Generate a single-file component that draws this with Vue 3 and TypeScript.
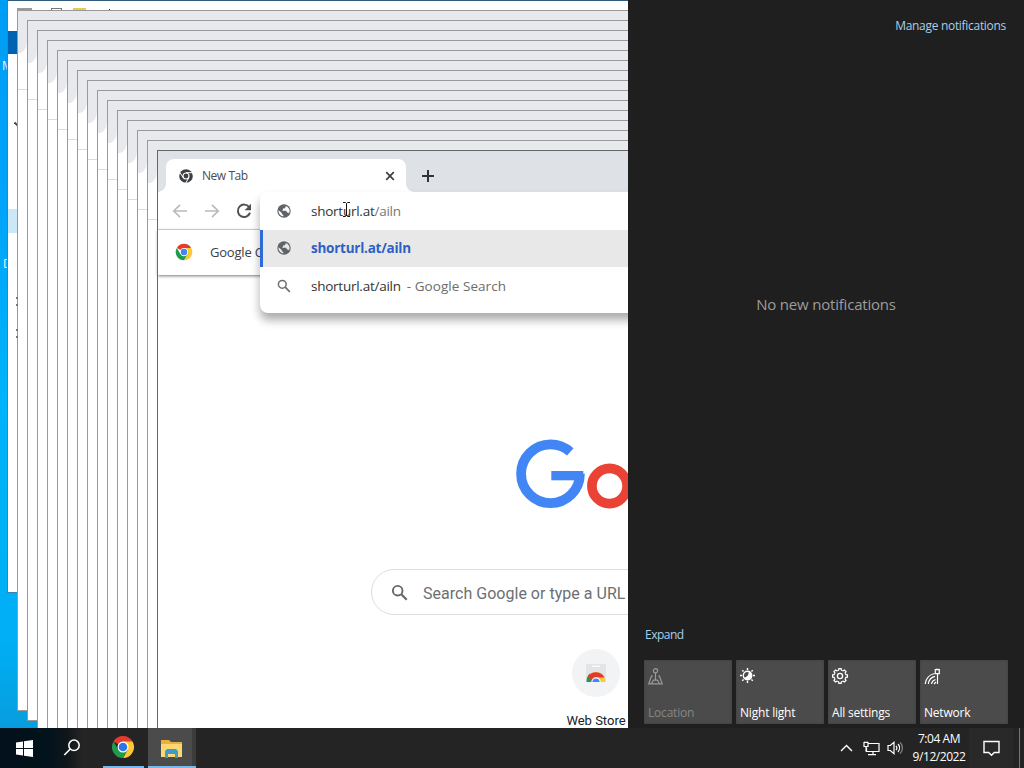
<script setup lang="ts">
interface Trail { x: number; y: number; h: number }

const trails: Trail[] = Array.from({ length: 14 }, (_, i) => ({
  x: 17 + i * 10,
  y: 10 + i * 10,
  h: 701,
}))
const explorerMarks: number[] = [297, 304, 329, 336]
const gearTeeth: number[] = [0, 45, 90, 135, 180, 225, 270, 315]
</script>

<template>
  <div class="desktop">
    <span class="desk-label first">M</span>
    <span class="desk-label second">D</span>

    <section class="explorer">
      <i class="ex-icon page-icon"></i>
      <i class="ex-icon check"></i>
      <i class="ex-icon folder"></i>
      <i class="ex-icon sep"></i>
      <i class="file-tab"></i>
      <svg class="chev" width="6" height="8" viewBox="0 0 6 8"><path d="M.5 1.500 5 6" stroke="#444" stroke-width="1.800" /></svg>
      <i class="selection"></i>
    </section>

    <div
      v-for="t in trails"
      :key="t.x"
      class="ghost"
      :style="{ left: t.x + 'px', top: t.y + 'px', height: t.h + 'px' }"
    >
      <div class="ghost-strip"></div>
      <div class="ghost-bar"><i class="ghost-curve"></i></div>
    </div>
    <i v-for="m in explorerMarks" :key="m" class="mark" :style="{ top: m + 'px' }"></i>

    <section class="chrome">
      <header class="strip">
        <div class="tab">
          <svg width="14" height="14" viewBox="0 0 14 14">
            <circle cx="7" cy="7" r="6.800" fill="#3c4043" />
            <circle cx="7" cy="7" r="3.500" fill="#fff" />
            <circle cx="7" cy="7" r="2.400" fill="#3c4043" />
            <path d="M7 3.700H13.500M4.100 8.700.9 3.300M9.900 8.700 6.700 14" stroke="#fff" stroke-width="1" fill="none" />
          </svg>
          <span class="tab-title">New Tab</span>
          <svg class="close" width="10" height="10" viewBox="0 0 10 10"><path d="m1.200 1.200 7.600 7.600m0-7.600-7.600 7.600" stroke="#3c4043" stroke-width="1.700" /></svg>
        </div>
        <svg class="plus" width="14" height="14" viewBox="0 0 14 14"><path d="M7 1v12M1 7h12" stroke="#303438" stroke-width="2" /></svg>
      </header>
      <div class="toolbar">
        <svg width="16" height="16" viewBox="0 0 16 16"><path d="M15 8H2M8 1.800 1.800 8 8 14.200" stroke="#b9bbbd" stroke-width="1.700" fill="none" /></svg>
        <svg width="16" height="16" viewBox="0 0 16 16"><path d="M1 8h13M8 1.800 14.200 8 8 14.200" stroke="#b9bbbd" stroke-width="1.700" fill="none" /></svg>
        <svg width="16" height="16" viewBox="0 0 16 16"><path d="M13.400 4.600A6.200 6.200 0 1 0 14 9.600" stroke="#505356" stroke-width="2" fill="none" /><path d="M15 .8v6.400H8.600z" fill="#505356" /></svg>
      </div>
      <div class="bookmarks">
        <svg width="18" height="18" viewBox="0 0 24 24">
          <path d="M12 12 2.470 6.500A11 11 0 0 1 21.530 6.500z" fill="#e33b2e" />
          <path d="M21.530 6.500A11 11 0 0 1 12 23L16.800 14.500 12 6.500z" fill="#fcc934" />
          <path d="M2.470 6.500A11 11 0 0 0 12 23l4.800-8.500H7.200z" fill="#1e9b4b" />
          <circle cx="12" cy="12" r="5.500" fill="#fff" /><circle cx="12" cy="12" r="4.300" fill="#4285f4" />
        </svg>
        <span>Google Chrome</span>
      </div>
      <main class="page">
        <svg class="logo" role="img" aria-label="Google" width="120" height="74" viewBox="514 437 120 74">
          <circle cx="550.500" cy="473.700" r="29.400" fill="none" stroke="#4285f4" stroke-width="9.800" stroke-dasharray="160 200" />
          <rect x="551.300" y="471" width="32" height="9.300" fill="#4285f4" />
          <circle cx="609.500" cy="486" r="17.600" fill="none" stroke="#ea4335" stroke-width="9.700" />
        </svg>
        <div class="searchbox">
          <svg width="18" height="18" viewBox="0 0 18 18"><circle cx="6.700" cy="6.700" r="4.800" fill="none" stroke="#66696c" stroke-width="1.900" /><path d="m10.300 10.300 5.400 5.400" stroke="#66696c" stroke-width="2.200" /></svg>
          <span>Search Google or type a URL</span>
        </div>
        <div class="shortcut">
          <div class="disc">
            <svg width="20" height="18" viewBox="0 0 20 18">
              <path d="M0 0h20v18H0z" fill="#e2e4e6" /><path d="M6 1.500h8v1.500H6z" fill="#f8f9fa" />
              <path d="M.5 18a9.500 10 0 0 1 19 0z" fill="#fcc934" />
              <path d="M.5 18A9.500 10 0 0 1 4 9.600L7.800 18z" fill="#1e9b4b" />
              <path d="M2 12.500a9.500 9.500 0 0 1 16.500 1H10L6 17z" fill="#e33b2e" />
              <path d="M5.300 18a4.700 4.700 0 0 1 9.400 0z" fill="#fff" /><path d="M6.400 18a3.600 3.600 0 0 1 7.200 0z" fill="#4285f4" />
            </svg>
          </div>
          <span>Web Store</span>
        </div>
      </main>

      <div class="omnibox">
        <div class="row">
          <svg width="14" height="14" viewBox="0 0 14 14"><circle cx="7" cy="7" r="6.700" fill="#5f6368" /><path d="M1.600 6.200 4.800 9v1l1.500 1v1.500A5.400 5.400 0 0 1 1.600 6.200zM8.600 1.900v1.400L7.300 4.600H5.900v1.500L4.800 6.800h4.400l.8 1.700h1.200l.8.900A5.400 5.400 0 0 0 8.600 1.900z" fill="#fff" /></svg>
          <span>shorturl.at<em>/ailn</em></span>
        </div>
        <div class="row active">
          <svg width="14" height="14" viewBox="0 0 14 14"><circle cx="7" cy="7" r="6.700" fill="#5f6368" /><path d="M1.600 6.200 4.800 9v1l1.500 1v1.500A5.400 5.400 0 0 1 1.600 6.200zM8.600 1.900v1.400L7.300 4.600H5.900v1.500L4.800 6.800h4.400l.8 1.700h1.200l.8.900A5.400 5.400 0 0 0 8.600 1.900z" fill="#e8e8e8" /></svg>
          <span>shorturl.at/ailn</span>
        </div>
        <div class="row">
          <svg width="14" height="14" viewBox="0 0 14 14"><circle cx="5.300" cy="5.300" r="3.900" fill="none" stroke="#6b6e71" stroke-width="1.500" /><path d="m8.200 8.200 4.600 4.600" stroke="#6b6e71" stroke-width="1.700" /></svg>
          <span>shorturl.at/ailn</span><span class="hint">- Google Search</span>
        </div>
      </div>
    </section>

    <svg class="cursor" width="9" height="15" viewBox="0 0 9 15"><path d="M1 .5h2.500l1 1 1-1H8M4.500 1.500v12M1 14.500h2.500l1-1 1 1H8" stroke="#111" fill="none" /></svg>

    <aside class="center">
      <div class="manage">Manage notifications</div>
      <div class="empty">No new notifications</div>
      <div class="expand">Expand</div>
      <div class="tiles">
        <div class="tile off">
          <svg width="18" height="18" viewBox="0 0 18 18" fill="none" stroke="#9a9a9a" stroke-width="1.200"><circle cx="7.500" cy="2.800" r="2.100" /><path d="M7.500 5v6.500M5 8H3.500L.8 15.800h13.400L11.500 8H10M3.500 15.500l2-3.300h4l2 3.300" /></svg>
          <span>Location</span>
        </div>
        <div class="tile">
          <svg width="18" height="18" viewBox="0 0 18 18" fill="none" stroke="#fff" stroke-width="1.400"><circle cx="7.500" cy="7.500" r="4.200" /><path d="M10.800 4.500A4.500 4.500 0 1 1 3.500 9.500C6.500 9.500 8.700 7.500 8.700 3.500z" fill="#fff" stroke="none" /><path d="M7.500 0v2M7.500 13v2M0 7.500h2M13 7.500h2M2.200 2.200l1.400 1.400M11.400 11.400l1.400 1.400M2.200 12.800l1.400-1.400M11.400 3.600l1.400-1.400" /></svg>
          <span>Night light</span>
        </div>
        <div class="tile">
          <svg width="18" height="18" viewBox="0 0 18 18" fill="none" stroke="#fff" stroke-width="1.300">
            <circle cx="8" cy="8" r="2.600" />
            <path v-for="a in gearTeeth" :key="a" d="M5.700 2.500 6.600 2.100 6.900.6h2.200l.3 1.500.9.400" :transform="`rotate(${a} 8 8)`" />
          </svg>
          <span>All settings</span>
        </div>
        <div class="tile">
          <svg width="18" height="18" viewBox="0 0 18 18" fill="none" stroke="#fff" stroke-width="1.200"><path d="M1.200 16A12 12 0 0 1 10.500 5.500M4.300 16A9 9 0 0 1 11 8.400M7.400 16A6 6 0 0 1 11.500 11.500M10 16l2-2M13.500 6v10M11.300 1.600h4v4h-4zM12.500.8v1.200M14.200.8v1.200" /></svg>
          <span>Network</span>
        </div>
      </div>
    </aside>

    <footer class="taskbar">
      <div class="start">
        <svg width="17" height="17" viewBox="0 0 17 17"><path d="M0 2.400 7 1.400V8H0zM8 1.300 17 0v8H8zM0 9h7v6.600L0 14.600zM8 9h9v8l-9-1.300z" fill="#fff" /></svg>
      </div>
      <div class="find">
        <svg width="18" height="18" viewBox="0 0 18 18" fill="none" stroke="#fff"><circle cx="11" cy="6.300" r="5.200" stroke-width="1.500" /><path d="M7.300 10 1.300 16" stroke-width="1.700" /></svg>
      </div>
      <div class="app">
        <svg width="24" height="24" viewBox="0 0 24 24">
          <path d="M12 12 2.470 6.500A11 11 0 0 1 21.530 6.500z" fill="#e33b2e" />
          <path d="M21.530 6.500A11 11 0 0 1 12 23L16.800 14.500 12 6.500z" fill="#fcc934" />
          <path d="M2.470 6.500A11 11 0 0 0 12 23l4.800-8.500H7.200z" fill="#1e9b4b" />
          <circle cx="12" cy="12" r="5.500" fill="#fff" /><circle cx="12" cy="12" r="4.300" fill="#2f74e8" />
        </svg>
      </div>
      <div class="app current">
        <svg width="22" height="19" viewBox="0 0 22 19">
          <path d="M0 1h8l2 2h11v15H0z" fill="#e9b13c" /><path d="M0 5h21v13H0z" fill="#fbd872" />
          <path d="M4 19v-7l2-2h9l2 2v7h-3v-4H7v4z" fill="#3f9bc8" />
        </svg>
      </div>
      <div class="tray">
        <svg class="up" width="13" height="8" viewBox="0 0 13 8"><path d="M1 7 6.500 1.400 12 7" stroke="#fff" stroke-width="1.400" fill="none" /></svg>
        <svg class="net" width="17" height="15" viewBox="0 0 17 15" fill="none" stroke="#fff" stroke-width="1.200"><path d="M5.500 2.500H16v8H3.500V6.500M10 10.500v3M5 13.700h8M1 1.500h4v4H1zM3 5.500v5M1.800.5v1.500M4.200.5v1.500" /></svg>
        <svg class="vol" width="17" height="14" viewBox="0 0 17 14" fill="none" stroke="#fff" stroke-width="1.200"><path d="M1 4.500h2.300L7 1.300v11.400L3.300 9.500H1zM9 4.800a3.500 3.500 0 0 1 0 4.400M11 3a6 6 0 0 1 0 8" /><path d="M13.200 1.300a8.500 8.500 0 0 1 0 11.400" stroke="#888" /></svg>
        <div class="clock"><span class="time">7:04 AM</span><span class="date">9/12/2022</span></div>
        <div class="action"><svg width="17" height="17" viewBox="0 0 17 17"><path d="M1 1.500h15v11h-4.700L8.500 15.300 5.700 12.500H1z" stroke="#fff" stroke-width="1.400" fill="none" /></svg></div>
        <i class="show-desktop"></i>
      </div>
    </footer>
  </div>
</template>

<style>
html, body { margin: 0; overflow: hidden; }
</style>

<style scoped>
.desktop {
  position: relative;
  width: 1024px;
  height: 768px;
  overflow: hidden;
  background: linear-gradient(#009df5 0, #00a4f8 200px, #00b3fa 400px, #00aff5 640px, #079ddd 728px);
  font: 12px/16px "Open Sans", "Noto Sans", sans-serif;
}
.desktop * { box-sizing: border-box; }
svg { display: block; flex: none; }
i { display: block; }
em { font-style: normal; color: #777; }
.desk-label { position: absolute; left: 2px; color: #e8f7ff; }
.desk-label.first { top: 58px; }
.desk-label.second { top: 256px; left: 3px; }

.explorer {
  position: absolute;
  left: 7px;
  top: 0;
  width: 700px;
  height: 593px;
  background: #fff;
  border: 1px solid #3b82ae;
  border-top-color: #305b7b;
}
.ex-icon { position: absolute; top: 7px; height: 2px; }
.page-icon { left: 9px; width: 15px; background: #999; }
.check { left: 43px; width: 11px; border: 1px solid #777; border-bottom: 0; }
.folder { left: 65px; width: 13px; background: #e7c85b; }
.sep { left: 101px; top: 8px; width: 1px; background: #333; }
.file-tab { position: absolute; left: 0; top: 30px; width: 12px; height: 23px; background: #0063b1; }
.selection { position: absolute; left: 0; top: 208px; width: 12px; height: 24px; background: #cce8f7; }
.chev { position: absolute; left: 6px; top: 120px; }
.mark { position: absolute; left: 16px; width: 2px; height: 2px; background: #777; }

.ghost {
  position: absolute;
  width: 900px;
  background: #fff;
  border: 1px solid #999;
}
.ghost-strip { height: 29px; background: #e8e9ed; }
.ghost-bar { height: 50px; border-bottom: 1px solid #dcdcdc; }
.ghost-curve { width: 9px; height: 13px; border-bottom-right-radius: 8px 12px; background: #e8e9ed; }

.chrome {
  position: absolute;
  left: 157px;
  top: 150px;
  width: 867px;
  height: 718px;
  background: #fff;
  border: 1px solid #666;
}
.strip { height: 41px; padding: 8px 0 0 8px; display: flex; background: #dee1e6; }
.tab {
  position: relative;
  width: 240px;
  height: 33px;
  padding: 0 11px 0 13px;
  border-radius: 8px 8px 0 0;
  display: flex;
  align-items: center;
  background: #fff;
}
.tab::before, .tab::after { content: ""; position: absolute; bottom: 0; width: 8px; height: 8px; }
.tab::before { left: -8px; background: radial-gradient(circle at 0 0, transparent 7.500px, #fff 8px); }
.tab::after { right: -8px; background: radial-gradient(circle at 100% 0, transparent 7.500px, #fff 8px); }
.tab-title { margin-left: 9px; color: #4a4d50; letter-spacing: -.45px; }
.tab-title { letter-spacing: -.45px; }
.close { margin-left: auto; }
.plus { margin: 10px 0 0 15px; }
.toolbar { height: 38px; padding-left: 14px; display: flex; align-items: center; gap: 16px; border-bottom: 1px solid #dadada; }
.bookmarks {
  height: 45px;
  padding: 0 0 2px 17px;
  display: flex;
  align-items: center;
  gap: 17px;
  color: #3c4043;
  font-size: 13px;
  letter-spacing: -.2px;
  box-shadow: 0 1px 3px #777;
}
.page { padding-top: 162px; }
.logo { margin-left: 356px; }
.searchbox {
  margin: 58px 0 0 213px;
  width: 560px;
  height: 46px;
  border: 1px solid #dadce0;
  border-radius: 23px;
  padding: 1px 0 0 19px;
  display: flex;
  align-items: center;
  gap: 14px;
  color: #6c6f72;
  font: 16px/20px Roboto, sans-serif;
}
.searchbox span { padding-top: 2px; letter-spacing: .02px; }
.shortcut { margin: 34px 0 0 382px; width: 112px; display: flex; flex-direction: column; align-items: center; gap: 16px; font: 13px/16px Roboto, sans-serif; color: #202124; }
.disc { width: 48px; height: 48px; display: flex; align-items: center; justify-content: center; border-radius: 50%; background: #f1f3f4; }

.omnibox {
  position: absolute;
  left: 102px;
  top: 41px;
  width: 640px;
  height: 121px;
  border-radius: 8px;
  background: #fff;
  box-shadow: 0 7px 10px rgba(0, 0, 0, .33);
  font-size: 13.500px;
}
.row { height: 37.500px; padding-left: 17px; display: flex; align-items: center; color: #333; letter-spacing: -.25px; }
.row > span { margin-left: 20px; }
.row > .hint { margin-left: 6px; color: #6c6c6c; letter-spacing: .05px; }
.active { padding-left: 14px; border-left: 3px solid #2f6bd8; background: #e8e8e8; color: #2f5fc4; font-weight: 700; }
.cursor { position: absolute; left: 342px; top: 202px; }

.center {
  position: absolute;
  left: 628px;
  top: 0;
  width: 396px;
  height: 728px;
  padding: 18px 15px 4px;
  display: flex;
  flex-direction: column;
  background: #1f1f1f;
  color: #a6d0ec;
}
.manage { align-self: flex-end; margin-right: 3px; letter-spacing: -.3px; }
.empty { margin-top: 260px; text-align: center; color: #9d9d9d; font-size: 15px; font-weight: 500; line-height: 20px; letter-spacing: -.2px; }
.expand { margin: auto 0 17px 2px; letter-spacing: -.5px; }
.tiles { height: 64px; display: grid; grid-template-columns: repeat(4, 88px); gap: 4px; margin-left: 1px; }
.tile {
  padding: 8px 4px 3px;
  display: flex;
  flex-direction: column;
  justify-content: space-between;
  background: #4b4b4b;
  box-shadow: inset 0 0 2px #3a3a3a;
  color: #fff;
}
.tile span { white-space: nowrap; letter-spacing: -.2px; }
.tile.off { color: #868686; }

.taskbar {
  position: absolute;
  inset: auto 0 0;
  height: 40px;
  display: flex;
  background: linear-gradient(90deg, #02111b 0, #02131c 50px, #111719 68px, #242424 82px);
}
.start, .find { width: 48px; display: flex; align-items: center; justify-content: center; }
.app { width: 41px; margin-left: 7px; padding-right: 1px; display: flex; align-items: center; justify-content: center; border-bottom: 2px solid #76b9ed; }
.current { width: 48px; margin-left: 4px; padding: 2px 0 0; background: linear-gradient(90deg, #4b4b4b 44px, #3c3c3c 44px); }
.tray { margin-left: auto; display: flex; align-items: center; color: #fff; }
.net { margin-left: 10px; }
.vol { margin-left: 7px; }
.clock { width: 68px; display: flex; flex-direction: column; align-items: center; line-height: 18px; margin-left: 1px; }
.time, .date { letter-spacing: -.45px; white-space: nowrap; }
.action { width: 44px; height: 40px; margin-left: -4px; display: flex; align-items: center; justify-content: center; background: #292929; }
.show-desktop { width: 1px; height: 40px; margin: 0 4px 0 6px; background: #777; }
</style>
